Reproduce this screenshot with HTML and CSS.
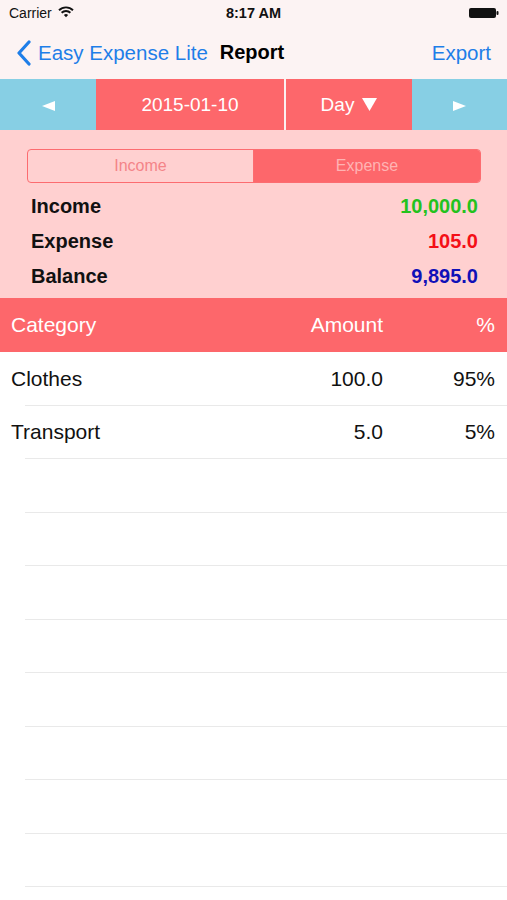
FILE: index.html
```html
<!DOCTYPE html>
<html>
<head>
<meta charset="utf-8">
<link rel="stylesheet" href="styles.css">
</head>
<body>
<div class="app">
  <div class="status">
    <div class="status-left">
      <span class="carrier">Carrier</span>
      <svg class="wifi" width="16" height="12" viewBox="0 0 16 12">
        <path d="M1 4.2 A10 10 0 0 1 15 4.2" fill="none" stroke="#111" stroke-width="1.9"/>
        <path d="M3.6 6.8 A6.3 6.3 0 0 1 12.4 6.8" fill="none" stroke="#111" stroke-width="1.9"/>
        <path d="M8 11.2 L5.9 9 A3 3 0 0 1 10.1 9 Z" fill="#111"/>
      </svg>
    </div>
    <div class="time">8:17 AM</div>
    <div class="status-right">
      <svg width="32" height="12" viewBox="0 0 32 12">
        <rect x="1" y="1" width="27" height="10" rx="2" fill="#111"/>
        <rect x="28.5" y="4" width="2" height="4" rx="1" fill="#111"/>
      </svg>
    </div>
  </div>
  <div class="nav">
    <div class="nav-back">
      <svg class="chev" width="16" height="26" viewBox="0 0 16 26">
        <path d="M13 2 L3 13 L13 24" fill="none" stroke="#1e7ee8" stroke-width="3.2" stroke-linecap="round" stroke-linejoin="round"/>
      </svg>
      <span class="back-text">Easy Expense Lite</span>
      <span class="title">Report</span>
    </div>
    <span class="export">Export</span>
  </div>
  <div class="datebar">
    <div class="cell cell-blue cell-prev">
      <svg width="13" height="10" viewBox="0 0 13 10"><polygon points="0,5 13,0 13,10" fill="#fff"/></svg>
    </div>
    <div class="cell cell-red cell-date">2015-01-10</div>
    <div class="cell cell-red cell-day">Day
      <svg class="down" width="15" height="13" viewBox="0 0 15 13"><polygon points="0,0 15,0 7.5,13" fill="#fff"/></svg>
    </div>
    <div class="cell cell-blue cell-next">
      <svg width="13" height="10" viewBox="0 0 13 10"><polygon points="13,5 0,0 0,10" fill="#fff"/></svg>
    </div>
  </div>
  <div class="summary">
    <div class="segment">
      <div class="seg seg-off">Income</div>
      <div class="seg seg-on">Expense</div>
    </div>
    <div class="sum-row"><span>Income</span><span class="v-green">10,000.0</span></div>
    <div class="sum-row"><span>Expense</span><span class="v-red">105.0</span></div>
    <div class="sum-row"><span>Balance</span><span class="v-blue">9,895.0</span></div>
  </div>
  <div class="thead">
    <span>Category</span><span class="r">Amount</span><span class="r">%</span>
  </div>
  <div class="tbody">
    <div class="row"><span>Clothes</span><span class="r">100.0</span><span class="r">95%</span></div>
    <div class="row"><span>Transport</span><span class="r">5.0</span><span class="r">5%</span></div>
    <div class="row"></div>
    <div class="row"></div>
    <div class="row"></div>
    <div class="row"></div>
    <div class="row"></div>
    <div class="row"></div>
    <div class="row"></div>
    <div class="row"></div>
  </div>
</div>
</body>
</html>
```
FILE: styles.css
```css
html, body {
  margin: 0;
  padding: 0;
  background: #ffffff;
}
body {
  width: 507px;
  height: 900px;
  overflow: hidden;
  font-family: "Liberation Sans", Arial, sans-serif;
}
.app {
  display: flex;
  flex-direction: column;
}
.status {
  height: 26px;
  background: #fcf3f3;
  display: flex;
  align-items: center;
  justify-content: space-between;
  padding: 0 7px 0 9px;
  position: relative;
  font-size: 14px;
  color: #111;
}
.status-left {
  display: flex;
  align-items: center;
  gap: 6px;
}
.wifi {
  margin-top: -2px;
}
.time {
  position: absolute;
  left: 0;
  right: 0;
  text-align: center;
  font-weight: bold;
  font-size: 14.5px;
  pointer-events: none;
}
.status-right {
  display: flex;
  align-items: center;
}
.nav {
  height: 53px;
  background: #fcf3f3;
  display: flex;
  align-items: center;
  justify-content: space-between;
  padding: 0 16px 0 16px;
}
.nav-back {
  display: flex;
  align-items: center;
}
.chev {
  margin-right: 6px;
}
.back-text {
  color: #1e7ee8;
  font-size: 20.5px;
}
.title {
  margin-left: 12px;
  font-weight: bold;
  font-size: 20px;
  color: #000;
}
.export {
  color: #1e7ee8;
  font-size: 20.5px;
}
.datebar {
  height: 51px;
  display: grid;
  grid-template-columns: 96px 190px 126px 95px;
  background: #fcf3f3;
}
.cell {
  display: flex;
  align-items: center;
  justify-content: center;
  color: #fff;
  font-size: 19px;
}
.cell-blue {
  background: #87cfe4;
}
.cell-red {
  background: #fd676b;
}
.cell-date {
  border-right: 2px solid #fcf0f0;
}
.cell-day {
  gap: 8px;
}
.cell-prev svg, .cell-next svg {
  margin-top: 2px;
}
.summary {
  background: #ffd0d0;
  padding: 19px 26px 4px 27px;
  display: flex;
  flex-direction: column;
}
.segment {
  height: 34px;
  box-sizing: border-box;
  border: 1px solid #fc6c70;
  border-radius: 4px;
  display: grid;
  grid-template-columns: 226px 1fr;
  overflow: hidden;
  margin-bottom: 6px;
}
.seg {
  display: flex;
  align-items: center;
  justify-content: center;
  font-size: 16px;
}
.seg-off {
  color: #f48488;
  border-right: 1px solid #fc6c70;
}
.seg-on {
  background: #fd676b;
  color: #ffb3b3;
}
.sum-row {
  height: 35px;
  display: flex;
  align-items: center;
  justify-content: space-between;
  padding: 0 3px 0 4px;
  font-size: 20px;
  font-weight: bold;
  color: #111;
}
.v-green { color: #24c21e; }
.v-red { color: #f40f17; }
.v-blue { color: #1010b8; }
.thead {
  height: 54px;
  background: #fd676b;
  color: #fff;
  display: grid;
  grid-template-columns: 1fr 120px 112px;
  align-items: center;
  padding: 0 12px 0 11px;
  font-size: 21px;
}
.r {
  text-align: right;
}
.tbody {
  display: flex;
  flex-direction: column;
}
.row {
  height: 53.5px;
  flex: none;
  box-sizing: border-box;
  display: grid;
  grid-template-columns: 1fr 120px 112px;
  align-items: center;
  padding: 0 12px 0 11px;
  font-size: 21px;
  color: #111;
  position: relative;
}
.row::after {
  content: "";
  position: absolute;
  left: 25px;
  right: 0;
  bottom: 0;
  height: 1px;
  background: #e9e9e9;
}
```
